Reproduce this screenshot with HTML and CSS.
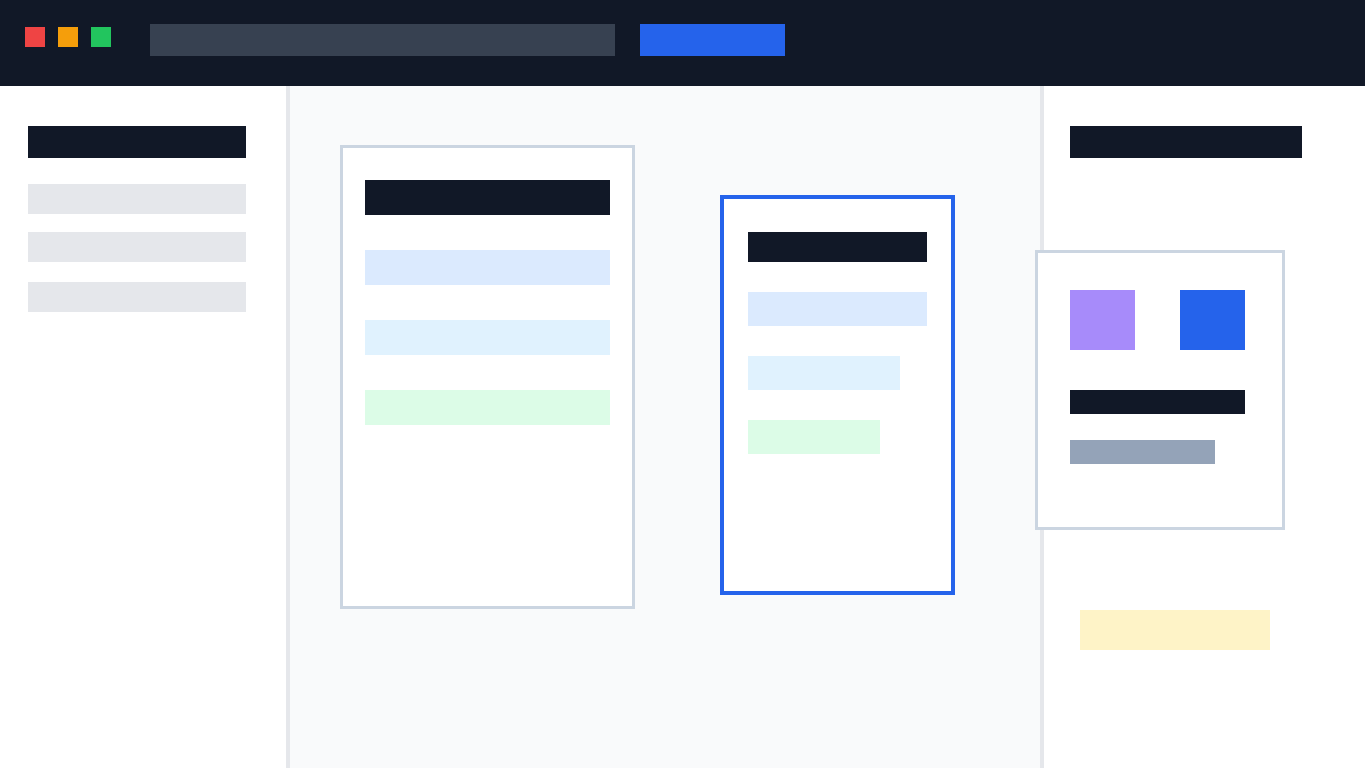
FILE: index.html
```html
<!DOCTYPE html>
<html lang="en">
<head>
<meta charset="utf-8">
<title>Wireframe</title>
<link rel="stylesheet" href="styles.css">
</head>
<body>
<div class="app">
  <header class="topbar">
    <div class="dots">
      <span class="dot dot-red"></span>
      <span class="dot dot-amber"></span>
      <span class="dot dot-green"></span>
    </div>
    <div class="search"></div>
    <div class="action"></div>
  </header>
  <div class="workspace">
    <aside class="sidebar">
      <div class="side-title"></div>
      <div class="side-item first"></div>
      <div class="side-item second"></div>
      <div class="side-item third"></div>
    </aside>
    <main class="canvas">
      <section class="card card-a">
        <div class="bar bar-dark"></div>
        <div class="bar bar-blue"></div>
        <div class="bar bar-sky"></div>
        <div class="bar bar-green"></div>
      </section>
      <section class="card card-b">
        <div class="bar bar-dark"></div>
        <div class="bar bar-blue"></div>
        <div class="bar bar-sky"></div>
        <div class="bar bar-green"></div>
      </section>
    </main>
    <aside class="inspector">
      <div class="insp-title"></div>
      <div class="insp-note"></div>
    </aside>
  </div>
  <div class="popover">
    <div class="swatches">
      <span class="swatch swatch-purple"></span>
      <span class="swatch swatch-blue"></span>
    </div>
    <div class="pop-line pop-dark"></div>
    <div class="pop-line pop-gray"></div>
  </div>
</div>
</body>
</html>
```
FILE: styles.css
```css
* { box-sizing: border-box; }
html, body { margin: 0; padding: 0; }
body {
  font-family: "Liberation Sans", Arial, sans-serif;
  background: #ffffff;
  width: 1365px;
  height: 768px;
  overflow: hidden;
}
.app {
  position: relative;
  width: 1365px;
  height: 768px;
  display: flex;
  flex-direction: column;
}
.topbar {
  height: 86px;
  background: #111827;
  display: flex;
  align-items: flex-start;
  padding-left: 25px;
  flex-shrink: 0;
}
.dots {
  display: flex;
  gap: 13px;
  margin-top: 27px;
}
.dot {
  width: 20px;
  height: 20px;
  display: block;
}
.dot-red { background: #ef4444; }
.dot-amber { background: #f59e0b; }
.dot-green { background: #22c55e; }
.search {
  margin-left: 39px;
  margin-top: 24px;
  width: 465px;
  height: 32px;
  background: #374151;
}
.action {
  margin-left: 25px;
  margin-top: 24px;
  width: 145px;
  height: 32px;
  background: #2563eb;
}
.workspace {
  flex: 1;
  display: flex;
}
.sidebar {
  width: 290px;
  border-right: 4px solid #e5e7eb;
  background: #ffffff;
  padding: 40px 28px 0;
}
.side-title {
  width: 218px;
  height: 32px;
  background: #111827;
}
.side-item {
  width: 218px;
  height: 30px;
  background: #e5e7eb;
}
.side-item.first { margin-top: 26px; }
.side-item.second { margin-top: 18px; }
.side-item.third { margin-top: 20px; }
.canvas {
  width: 750px;
  background: #f9fafb;
  display: flex;
  align-items: flex-start;
  padding: 59px 0 0 50px;
  gap: 85px;
}
.card {
  background: #ffffff;
  display: flex;
  flex-direction: column;
  align-items: flex-start;
}
.card-a {
  width: 295px;
  height: 464px;
  border: 3px solid #cbd5e1;
  padding: 32px 22px;
  gap: 35px;
}
.card-a .bar { width: 245px; height: 35px; }
.card-b {
  width: 235px;
  height: 400px;
  margin-top: 50px;
  border: 4px solid #2563eb;
  padding: 33px 24px;
  gap: 30px;
}
.card-b .bar { height: 34px; }
.card-b .bar-dark { width: 179px; height: 30px; }
.card-b .bar-blue { width: 179px; }
.card-b .bar-sky { width: 152px; }
.card-b .bar-green { width: 132px; }
.bar-dark { background: #111827; }
.bar-blue { background: #dbeafe; }
.bar-sky { background: #e0f2fe; }
.bar-green { background: #dcfce7; }
.inspector {
  flex: 1;
  border-left: 4px solid #e5e7eb;
  background: #ffffff;
  padding: 40px 0 0 26px;
}
.insp-title {
  width: 232px;
  height: 32px;
  background: #111827;
}
.insp-note {
  margin-top: 452px;
  margin-left: 10px;
  width: 190px;
  height: 40px;
  background: #fef3c7;
}
.popover {
  position: absolute;
  left: 1035px;
  top: 250px;
  width: 250px;
  height: 280px;
  background: #ffffff;
  border: 3px solid #cbd5e1;
  padding: 37px 0 0 32px;
}
.swatches {
  display: flex;
  gap: 45px;
}
.swatch {
  display: block;
  width: 65px;
  height: 60px;
}
.swatch-purple { background: #a78bfa; }
.swatch-blue { background: #2563eb; }
.pop-line { height: 24px; }
.pop-dark {
  margin-top: 40px;
  width: 175px;
  background: #111827;
}
.pop-gray {
  margin-top: 26px;
  width: 145px;
  background: #94a3b8;
}
```
